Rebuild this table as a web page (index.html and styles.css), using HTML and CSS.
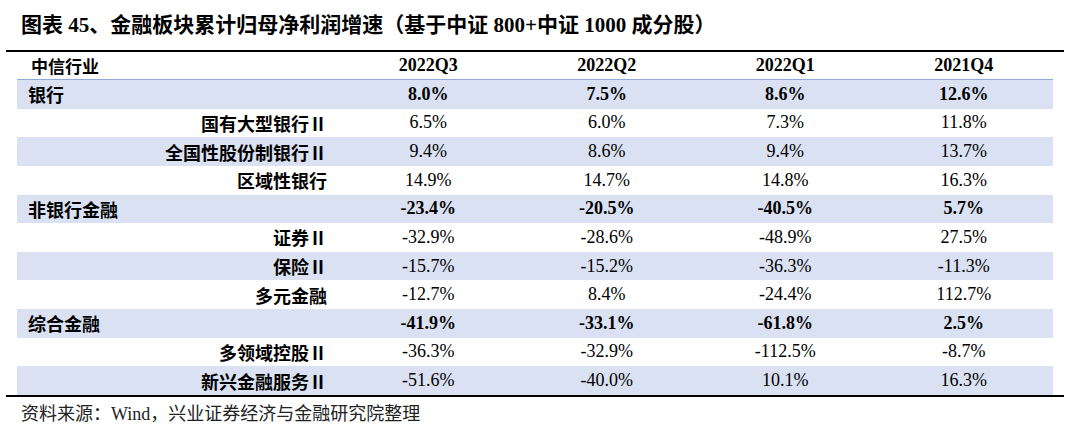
FILE: index.html
```html
<!DOCTYPE html>
<html lang="zh">
<head>
<meta charset="utf-8">
<link rel="stylesheet" href="styles.css">
</head>
<body>
<div class="title">图表<span class="num"> 45</span>、金融板块累计归母净利润增速（基于中证<span class="num"> 800+</span>中证<span class="num"> 1000 </span>成分股）</div>
<div class="table">
  <div class="row head">
    <div class="label">中信行业</div>
    <div class="val">2022Q3</div>
    <div class="val">2022Q2</div>
    <div class="val">2022Q1</div>
    <div class="val">2021Q4</div>
  </div>
  <div class="row group shade">
    <div class="label">银行</div>
    <div class="val">8.0%</div><div class="val">7.5%</div><div class="val">8.6%</div><div class="val">12.6%</div>
  </div>
  <div class="row sub">
    <div class="label">国有大型银行Ⅱ</div>
    <div class="val">6.5%</div><div class="val">6.0%</div><div class="val">7.3%</div><div class="val">11.8%</div>
  </div>
  <div class="row sub shade">
    <div class="label">全国性股份制银行Ⅱ</div>
    <div class="val">9.4%</div><div class="val">8.6%</div><div class="val">9.4%</div><div class="val">13.7%</div>
  </div>
  <div class="row sub">
    <div class="label">区域性银行</div>
    <div class="val">14.9%</div><div class="val">14.7%</div><div class="val">14.8%</div><div class="val">16.3%</div>
  </div>
  <div class="row group shade">
    <div class="label">非银行金融</div>
    <div class="val">-23.4%</div><div class="val">-20.5%</div><div class="val">-40.5%</div><div class="val">5.7%</div>
  </div>
  <div class="row sub">
    <div class="label">证券Ⅱ</div>
    <div class="val">-32.9%</div><div class="val">-28.6%</div><div class="val">-48.9%</div><div class="val">27.5%</div>
  </div>
  <div class="row sub shade">
    <div class="label">保险Ⅱ</div>
    <div class="val">-15.7%</div><div class="val">-15.2%</div><div class="val">-36.3%</div><div class="val">-11.3%</div>
  </div>
  <div class="row sub">
    <div class="label">多元金融</div>
    <div class="val">-12.7%</div><div class="val">8.4%</div><div class="val">-24.4%</div><div class="val">112.7%</div>
  </div>
  <div class="row group shade">
    <div class="label">综合金融</div>
    <div class="val">-41.9%</div><div class="val">-33.1%</div><div class="val">-61.8%</div><div class="val">2.5%</div>
  </div>
  <div class="row sub">
    <div class="label">多领域控股Ⅱ</div>
    <div class="val">-36.3%</div><div class="val">-32.9%</div><div class="val">-112.5%</div><div class="val">-8.7%</div>
  </div>
  <div class="row sub shade">
    <div class="label">新兴金融服务Ⅱ</div>
    <div class="val">-51.6%</div><div class="val">-40.0%</div><div class="val">10.1%</div><div class="val">16.3%</div>
  </div>
</div>
<div class="source">资料来源：<span class="latin">Wind</span>，兴业证券经济与金融研究院整理</div>
</body>
</html>
```
FILE: styles.css
```css
html, body {
  margin: 0;
  padding: 0;
  background: #ffffff;
}
body {
  width: 1080px;
  height: 430px;
  overflow: hidden;
  color: #000;
  font-family: "Liberation Serif", "Noto Sans CJK SC", serif;
}
.title {
  padding: 9px 0 0 21px;
  height: 28px;
  line-height: 28px;
  font-size: 21px;
  font-weight: 700;
  font-family: "Noto Sans CJK SC", sans-serif;
  white-space: nowrap;
  margin-bottom: 13px;
}
.title .num {
  font-family: "Liberation Serif", serif;
  font-weight: 700;
}
.table {
  margin-left: 6px;
  width: 1058px;
  box-sizing: border-box;
  padding: 0 11px;
  border-top: 2px solid #000;
  border-bottom: 2px solid #000;
}
.row {
  display: grid;
  grid-template-columns: 322px repeat(4, 1fr);
  align-items: center;
  height: 28.64px;
}
.row.head {
  height: 27px;
  border-bottom: 1px solid #8eaadb;
}
.shade {
  background: #d9e1f2;
}
.label {
  font-family: "Noto Sans CJK SC", sans-serif;
  font-weight: 700;
  font-size: 18px;
  white-space: nowrap;
}
.group .label {
  padding-left: 11px;
}
.head .label {
  padding-left: 14px;
  font-size: 17px;
}
.sub .label {
  text-align: right;
  padding-right: 12px;
}
.val {
  text-align: center;
  font-family: "Liberation Serif", serif;
  font-size: 18px;
}
.head .val,
.group .val {
  font-weight: 700;
}
.source {
  padding: 3px 0 0 21px;
  line-height: 24px;
  font-size: 18px;
  color: #222;
  font-family: "Noto Sans CJK SC", sans-serif;
  white-space: nowrap;
}
.source .latin {
  font-family: "Liberation Serif", serif;
  font-size: 18px;
}
```
